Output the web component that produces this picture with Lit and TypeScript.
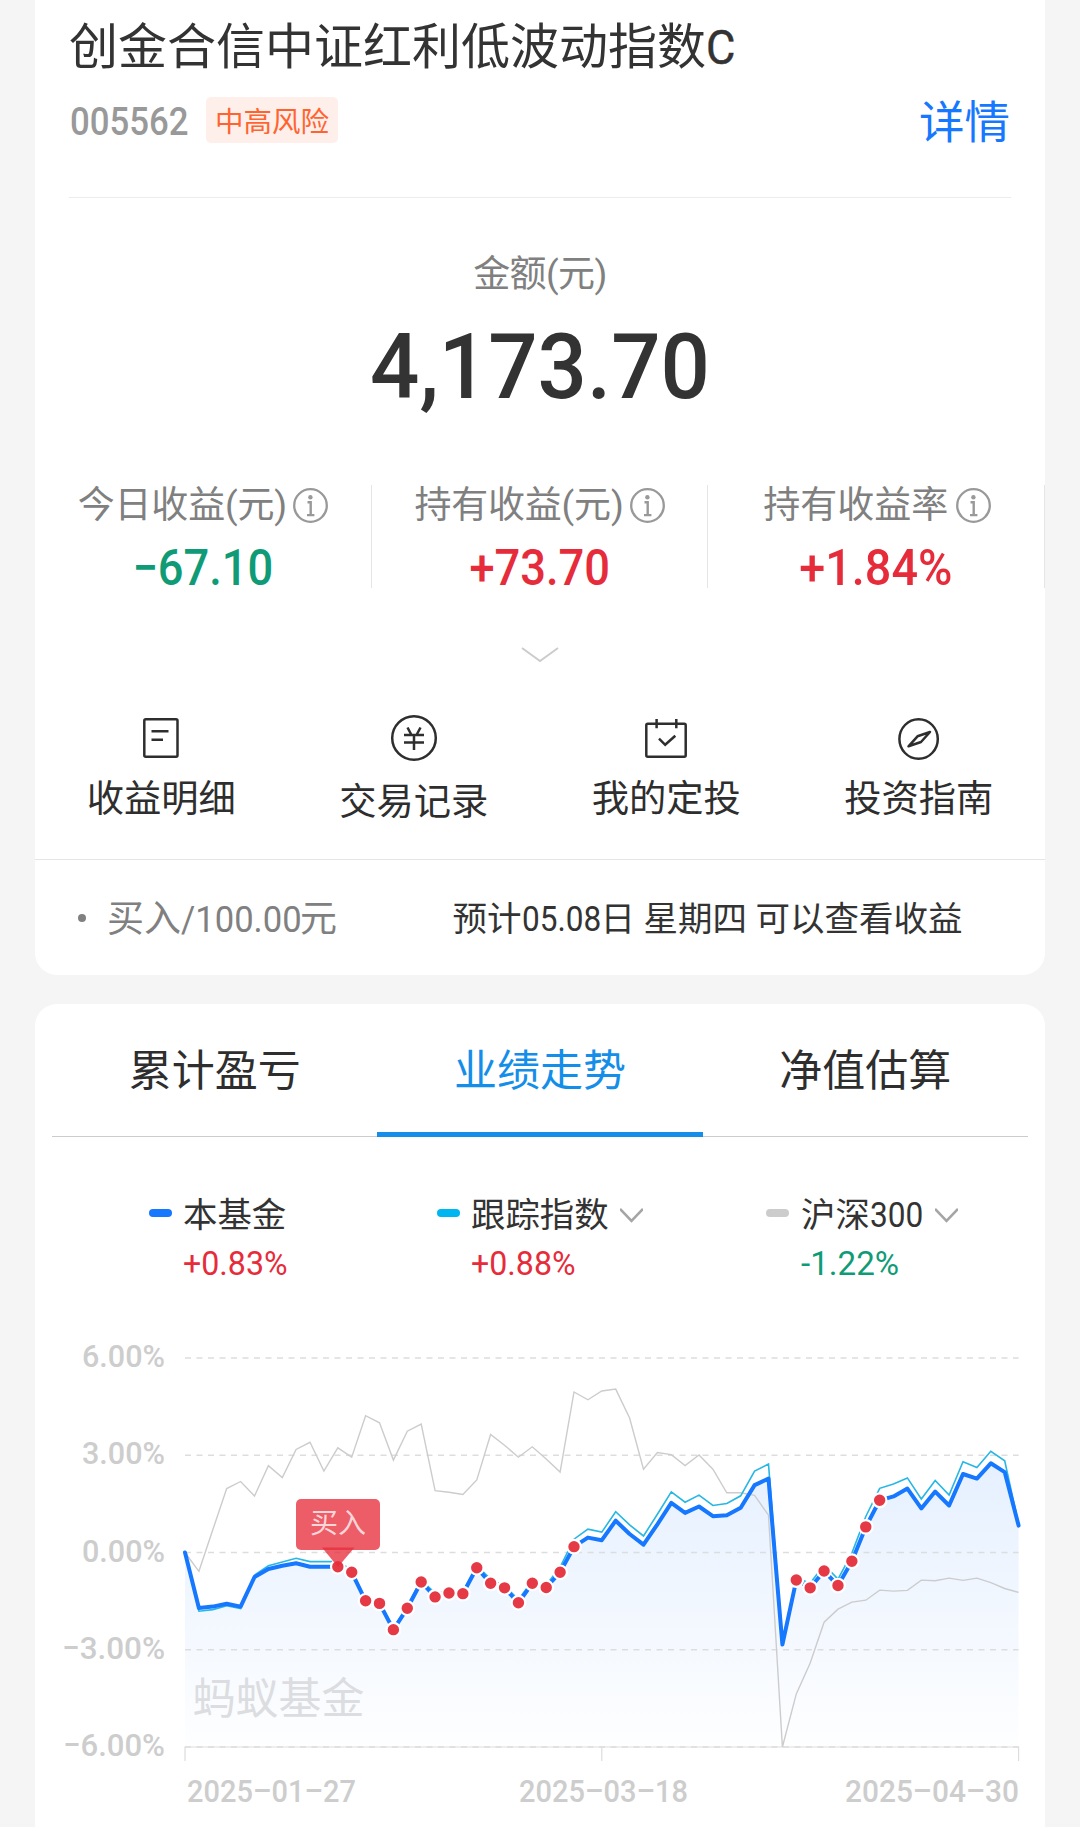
import { LitElement, html, svg, css } from "lit";
import { customElement, property } from "lit/decorators.js";

const FUND = [0, -1.71, -1.67, -1.58, -1.67, -0.76, -0.51, -0.41, -0.33, -0.44, -0.44, -0.44, -0.61, -1.49, -1.57, -2.38, -1.72, -0.91, -1.37, -1.25, -1.27, -0.47, -0.95, -1.09, -1.55, -0.95, -1.08, -0.61, 0.18, 0.46, 0.38, 0.98, 0.57, 0.24, 0.87, 1.53, 1.22, 1.42, 1.12, 1.15, 1.38, 2.08, 2.28, -2.84, -0.85, -1.09, -0.57, -1.02, -0.27, 0.79, 1.61, 1.73, 1.97, 1.36, 1.88, 1.45, 2.42, 2.28, 2.75, 2.48, 0.83];
const INDEX = [0, -1.81, -1.76, -1.64, -1.73, -0.7, -0.41, -0.29, -0.18, -0.28, -0.28, -0.28, -0.53, -1.45, -1.52, -2.35, -1.65, -0.85, -1.25, -1.2, -1.2, -0.4, -0.82, -1.02, -1.45, -0.88, -1.0, -0.45, 0.41, 0.72, 0.63, 1.26, 0.85, 0.51, 1.18, 1.87, 1.55, 1.77, 1.45, 1.51, 1.75, 2.51, 2.73, -2.8, -0.78, -0.95, -0.38, -0.82, -0.02, 1.11, 1.98, 2.11, 2.3, 1.65, 2.22, 1.77, 2.8, 2.62, 3.12, 2.83, 0.88];
const CSI300 = [0, -0.58, 0.7, 1.97, 2.19, 1.74, 2.68, 2.31, 3.18, 3.4, 2.51, 3.23, 2.94, 4.22, 4.0, 2.85, 3.74, 3.96, 1.91, 1.86, 1.79, 2.24, 3.64, 3.31, 2.94, 3.26, 2.88, 2.48, 4.95, 4.71, 4.98, 5.04, 4.15, 2.57, 3.08, 3.02, 2.68, 3.01, 2.57, 1.84, 1.84, 1.76, 1.15, -6, -4.36, -3.41, -2.15, -1.75, -1.53, -1.47, -1.16, -1.19, -1.17, -0.85, -0.87, -0.79, -0.86, -0.79, -0.93, -1.11, -1.23];
const BUY_DAYS = FUND.map((_, i) => i).filter((i) => (i >= 11 && i <= 28) || (i >= 44 && i <= 50));

const FONT = css`Roboto, "Noto Sans CJK SC", sans-serif`;

@customElement("trend-chart")
class TrendChart extends LitElement {
  static styles = css`
    :host { display: block; }
    svg { display: block; font-family: ${FONT}; }
    .axis { font-size: 32px; font-weight: 500; fill: #cdcdcd; }
    .mark { font-size: 43px; fill: #dcdde1; }
    .tip { font-size: 28px; fill: #fbd5d8; }
  `;
  x(i: number) { return 150 + i * 13.893; }
  y(v: number) { return 222.5 - v * 32.42; }
  path(data: number[]) {
    return data.map((v, i) => `${i ? "L" : "M"}${this.x(i).toFixed(1)} ${this.y(v).toFixed(1)}`).join("");
  }
  render() {
    const left = this.x(0), right = this.x(60), bottom = this.y(-6);
    const labels: [number, string, number][] = [[6, "6.00%", 83], [3, "3.00%", 83], [0, "0.00%", 83], [-3, "−3.00%", 103], [-6, "−6.00%", 102]];
    const dates: [string, number, number][] = [["2025–01–27", 152, 169], ["2025–03–18", 484, 169], ["2025–04–30", 810, 174]];
    return html`<svg width="1010" height="497" viewBox="0 0 1010 497">
      <defs>
        <linearGradient id="area" x1="0" x2="0" y1="0" y2="1">
          <stop offset="0" stop-color="#1677ff" stop-opacity=".11"></stop>
          <stop offset="1" stop-color="#1677ff" stop-opacity=".005"></stop>
        </linearGradient>
      </defs>
      <path d="${this.path(FUND)}L${right} ${bottom}L${left} ${bottom}Z" fill="url(#area)"></path>
      ${[6, 3, 0, -3, -6].map((v) => svg`<line x1=${left} x2=${right} y1=${this.y(v)} y2=${this.y(v)} stroke="#ddd" stroke-width="1.3" stroke-dasharray="6 5.5"></line>`)}
      <path d="M${left} ${bottom + 14}V${bottom}H${right}V${bottom + 14}M${this.x(30)} ${bottom}V${bottom + 14}" fill="none" stroke="#ddd" stroke-width="1.2"></path>
      ${labels.map(([v, t, w]) => svg`<text class="axis" x=${130 - w} y=${this.y(v) + 9} textLength=${w} lengthAdjust="spacingAndGlyphs">${t}</text>`)}
      ${dates.map(([t, x, w]) => svg`<text class="axis" x=${x} y="472" textLength=${w} lengthAdjust="spacingAndGlyphs">${t}</text>`)}
      <text class="mark" x="157.5" y="383.5">蚂蚁基金</text>
      <path d=${this.path(CSI300)} fill="none" stroke="#ccc" stroke-width="1.4"></path>
      <path d=${this.path(INDEX)} fill="none" stroke="#27b7e4" stroke-width="1.6"></path>
      <path d=${this.path(FUND)} fill="none" stroke="#1677ff" stroke-width="4" stroke-linejoin="round" stroke-linecap="round"></path>
      ${BUY_DAYS.map((i) => svg`<circle cx=${this.x(i)} cy=${this.y(FUND[i])} r="6.8" fill="#e63946" stroke="#fff" stroke-width="2.2"></circle>`)}
      <rect x="261" y="169" width="84" height="51" rx="5" fill="#e62c3b" fill-opacity=".77"></rect>
      <path d="M287 217.5H319.5L303 237Z" fill="#e62c3b" fill-opacity=".77"></path>
      <text class="tip" x="303" y="203.3" text-anchor="middle">买入</text>
    </svg>`;
  }
}

@customElement("info-icon")
class InfoIcon extends LitElement {
  static styles = css`:host { display: block; } svg { display: block; }`;
  render() {
    return html`<svg width="35" height="35" viewBox="0 0 35 35" fill="none" stroke="#999">
      <circle cx="17.5" cy="17.5" r="16.3" stroke-width="2.3"></circle>
      <path d="M14.5 14.3H17.7V27M14 27.1H21.4" stroke-width="2.4"></path>
      <circle cx="17.4" cy="9.2" r="2.2" fill="#999" stroke="none"></circle>
    </svg>`;
  }
}

@customElement("profit-stat")
class ProfitStat extends LitElement {
  @property() label = "";
  @property() value = "";
  @property({ type: Boolean }) down = false;
  @property({ type: Boolean }) rate = false;
  static styles = css`
    :host { flex: 1; display: flex; flex-direction: column; align-items: center; border-right: 1px solid #e5e5e5; box-sizing: border-box; height: 103px; }
    .head { display: flex; align-items: center; gap: 6px; height: 41px; font-size: 37px; color: #808080; white-space: nowrap; line-height: 37px; }
    .head span { padding-top: 2px; letter-spacing: -0.2px; }
    .head info-icon { padding-top: 1px; }
    .rate { gap: 8px; padding-left: 2px; }
    .rate span { letter-spacing: 0; }
    .value { font-size: 50px; font-weight: 500; line-height: 58px; margin-top: 15px; color: #e62c3b; transform: scaleX(0.905); white-space: nowrap; }
    .rate + .value { transform: scaleX(0.935); }
    .down { color: #0f9b76; }
  `;
  render() {
    return html`<div class="head ${this.rate ? "rate" : ""}"><span>${this.label}</span><info-icon></info-icon></div>
      <div class="value ${this.down ? "down" : ""}">${this.value}</div>`;
  }
}

const ICONS = {
  bill: svg`<rect x="5.3" y="4.3" width="33.2" height="37.5" rx="1.5"></rect><path d="M12.5 16.3H29.5M12.5 24.7H24"></path>`,
  yen: svg`<circle cx="22" cy="23" r="21.8"></circle><path d="M15.5 12.5L19.5 20M28.5 12.5L24.5 20M12 20H32M12 27.5H32M22 20V35"></path>`,
  plan: svg`<rect x="2.3" y="8.8" width="39.4" height="33" rx="1.5"></rect><path d="M12.6 4V13.3M32.3 4V13.3M15 23.7L21.2 29.8L31.3 20.8"></path>`,
  guide: svg`<ellipse cx="21.6" cy="24" rx="19.2" ry="19.8"></ellipse><path d="M33 17L20.5 21.3L11.5 31.3L24 27Z" stroke-linejoin="round"></path>`,
};

@customElement("app-root")
class AppRoot extends LitElement {
  static styles = css`
    :host { display: block; width: 1080px; height: 1827px; overflow: hidden; background: #f5f5f5; font-family: ${FONT}; color: #333; }
    .page { display: flex; flex-direction: column; gap: 29px; padding: 0 35px; }
    .card { background: #fff; display: flex; flex-direction: column; }
    .fund { border-radius: 0 0 22px 22px; height: 975px; }
    .trend { border-radius: 22px 22px 0 0; height: 823px; }
    .intro { margin: 0 34px; height: 197px; border-bottom: 1px solid #ececec; }
    .name { font-size: 49px; line-height: 60px; padding-top: 18px; white-space: nowrap; }
    .name b { display: inline-block; font-weight: 400; transform: scaleX(0.92); transform-origin: left; -webkit-text-stroke: 0.5px #333; }
    .meta { display: flex; align-items: center; margin-top: 12px; height: 60px; }
    .code { font-size: 38px; line-height: 46px; font-weight: 500; color: #999; width: 119px; margin: 4px 17px 0 1px; }
    .squeeze { display: inline-block; transform: scaleX(0.915); transform-origin: left; }
    .risk { font-size: 28.5px; line-height: 51px; height: 46px; border-radius: 5px; background: #ffefeb; color: #ff6430; width: 132px; text-align: center; }
    .detail { margin: 7px 1px 0 auto; font-size: 45.5px; line-height: 54px; color: #1677ff; }
    .amount { display: flex; flex-direction: column; align-items: center; height: 287px; }
    .caption { margin-top: 50px; font-size: 37px; line-height: 54px; color: #808080; letter-spacing: -0.6px; }
    .total { font-size: 91px; font-weight: 500; line-height: 100px; margin-top: 15px; transform: scaleX(0.955); }
    .stats { display: flex; }
    .more { display: flex; justify-content: center; height: 127px; }
    .more svg { margin-top: 57px; }
    .actions { display: flex; height: 144px; }
    .action { flex: 1; display: flex; flex-direction: column; align-items: center; font-size: 37.3px; color: #2e2e2e; }
    .action span { line-height: 54px; margin-top: 11px; }
    .action.low span { margin-top: 14px; }
    .pending { display: flex; align-items: center; border-top: 1px solid #e5e5e5; height: 115px; font-size: 37px; color: #808080; white-space: nowrap; }
    .dot { width: 8px; height: 8px; border-radius: 50%; background: #808080; margin: 0 21px 0 43px; }
    .order { width: 345.5px; margin-top: -3px; }
    .order b, .eta b, .item b { display: inline-block; font-weight: 400; transform-origin: left; }
    .order b { width: 119px; transform: scaleX(0.935); }
    .eta { font-size: 34.5px; color: #333; margin-top: -4px; }
    .eta b { width: 79px; transform: scaleX(0.915); }
    .tabs { display: flex; margin: 0 17px; height: 133px; border-bottom: 1px solid #ccc; box-sizing: border-box; }
    .tab { flex: 1; box-sizing: border-box; text-align: center; font-size: 43px; line-height: 135px; height: 133px; color: #2e2e2e; }
    .tab.on { color: #148ee9; border-bottom: 5px solid #148ee9; }
    .legend { display: flex; height: 193px; padding-top: 55px; box-sizing: border-box; }
    .item { display: grid; grid-template-columns: 23px auto auto; column-gap: 11px; align-items: center; align-content: start; justify-content: start; font-size: 34.4px; line-height: 46px; white-space: nowrap; box-sizing: border-box; }
    .a { padding-left: 114px; width: 288px; }
    .b { padding-left: 114px; width: 443px; }
    .c { column-gap: 12px; }
    .item i { height: 8px; border-radius: 4px; margin-top: -4px; }
    .item b { width: 53px; transform: scaleX(0.92); }
    .blue { background: #1677ff; } .cyan { background: #00b6f0; } .grey { background: #ccc; }
    .pct { grid-column: 2; font-size: 33.5px; line-height: 48px; margin-top: 2px; color: #e62c3b; height: 48px; transform: scaleX(0.96); transform-origin: left; }
    .pct.green { color: #0f9b76; transform: scaleX(0.99); }
  `;
  action(icon: unknown, label: string, low = false) {
    return html`<div class="action ${low ? "low" : ""}"><svg width="44" height="46" viewBox="0 0 44 46" fill="none" stroke="#2e2e2e" stroke-width="2.5" overflow="visible">${icon}</svg><span>${label}</span></div>`;
  }
  arrow() {
    return html`<svg width="23" height="15" viewBox="0 0 23 15" fill="none" stroke="#a5a5a5" stroke-width="2.6"><path d="M0 1L11.5 12.8L23 1"></path></svg>`;
  }
  render() {
    return html`<div class="page">
      <section class="card fund">
        <div class="intro">
          <div class="name">创金合信中证红利低波动指数<b>C</b></div>
          <div class="meta">
            <div class="code"><span class="squeeze">005562</span></div>
            <div class="risk">中高风险</div>
            <div class="detail">详情</div>
          </div>
        </div>
        <div class="amount">
          <div class="caption">金额(元)</div>
          <div class="total">4,173.70</div>
        </div>
        <div class="stats">
          <profit-stat label="今日收益(元)" value="−67.10" down></profit-stat>
          <profit-stat label="持有收益(元)" value="+73.70"></profit-stat>
          <profit-stat label="持有收益率" value="+1.84%" rate></profit-stat>
        </div>
        <div class="more"><svg width="38" height="20" viewBox="0 0 38 20" fill="none" stroke="#ccc" stroke-width="2"><path d="M1 3L19 16L37 3"></path></svg></div>
        <div class="actions">
          ${this.action(ICONS.bill, "收益明细")}
          ${this.action(ICONS.yen, "交易记录", true)}
          ${this.action(ICONS.plan, "我的定投")}
          ${this.action(ICONS.guide, "投资指南")}
        </div>
        <div class="pending">
          <div class="dot"></div>
          <div class="order">买入<b>/100.00</b>元</div>
          <div class="eta">预计<b>05.08</b>日 星期四 可以查看收益</div>
        </div>
      </section>
      <section class="card trend">
        <div class="tabs">
          <div class="tab">累计盈亏</div>
          <div class="tab on">业绩走势</div>
          <div class="tab">净值估算</div>
        </div>
        <div class="legend">
          <div class="item a"><i class="blue"></i><span>本基金</span><span></span><div class="pct">+0.83%</div></div>
          <div class="item b"><i class="cyan"></i><span>跟踪指数</span>${this.arrow()}<div class="pct">+0.88%</div></div>
          <div class="item c"><i class="grey"></i><span>沪深<b>300</b></span>${this.arrow()}<div class="pct green">-1.22%</div></div>
        </div>
        <trend-chart></trend-chart>
      </section>
    </div>`;
  }
}
